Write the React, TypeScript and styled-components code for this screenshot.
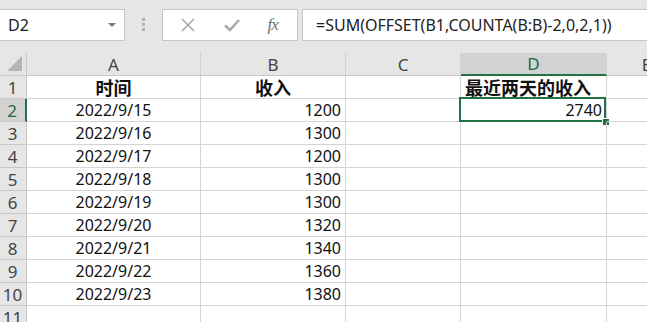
import React from "react";
import styled, { createGlobalStyle } from "styled-components";

// ─── Global ───────────────────────────────────────────────────────────────────

const GlobalStyle = createGlobalStyle`
  html, body {
    margin: 0;
    padding: 0;
    background: #ffffff;
    overflow: hidden;
  }
  body {
    font-family: "Noto Sans", "Noto Sans CJK SC", sans-serif;
  }
`;

// ─── Formula bar ──────────────────────────────────────────────────────────────

const Toolbar = styled.div`
  display: flex;
  align-items: flex-start;
  height: 53px;
  padding-top: 9px;
  box-sizing: border-box;
  background: #e6e6e6;
`;

const NameBox = styled.div`
  width: 126px;
  height: 32px;
  margin-left: -1px;
  box-sizing: border-box;
  background: #fff;
  border: 1px solid #c6c6c6;
  display: flex;
  align-items: center;
  justify-content: space-between;
  padding: 0 8px 0 8px;
  font-size: 16px;
  color: #222;
`;

const DropArrow = styled.span`
  width: 0;
  height: 0;
  border-left: 4px solid transparent;
  border-right: 4px solid transparent;
  border-top: 4px solid #7a7a7a;
`;

const Grip = styled.div`
  margin: 9px 0 0 17px;
  display: flex;
  flex-direction: column;
  gap: 2px;
`;

const GripDot = styled.span`
  width: 3px;
  height: 3px;
  background: #b3b3b3;
`;

const FuncBox = styled.div`
  margin-left: 17px;
  width: 136px;
  height: 32px;
  box-sizing: border-box;
  background: #fff;
  border: 1px solid #c6c6c6;
  display: flex;
  align-items: center;
  justify-content: space-around;
  padding: 0 6px 0 4px;
`;

const Fx = styled.span`
  font-family: "Liberation Serif", "DejaVu Serif", serif;
  font-style: italic;
  font-size: 17px;
  color: #6f6f6f;
  letter-spacing: -1px;
`;

const FormulaInput = styled.div`
  flex: 1;
  margin-left: 4px;
  margin-right: -2px;
  height: 32px;
  box-sizing: border-box;
  background: #fff;
  border: 1px solid #c6c6c6;
  display: flex;
  align-items: center;
  padding-left: 13px;
  font-size: 16px;
  color: #222;
  white-space: nowrap;
  overflow: hidden;
`;

// ─── Sheet ────────────────────────────────────────────────────────────────────

const Sheet = styled.div`
  display: grid;
  grid-template-columns: 27px 174px 145px 115px 146px 80px;
  grid-template-rows: 23px;
  grid-auto-rows: 23px;
  background: #fff;
`;

const Corner = styled.div`
  background: #e6e6e6;
  border-right: 1px solid #c8c8c8;
  border-bottom: 1px solid #c8c8c8;
  box-sizing: border-box;
  position: relative;

  &::after {
    content: "";
    position: absolute;
    right: 4px;
    bottom: 4px;
    width: 0;
    height: 0;
    border-left: 15px solid transparent;
    border-bottom: 15px solid #b4b4b4;
  }
`;

const ColHead = styled.div<{ $active?: boolean }>`
  background: ${p => (p.$active ? "#d2d2d2" : "#e6e6e6")};
  color: ${p => (p.$active ? "#1e6b41" : "#444")};
  border-right: 1px solid #cfcfcf;
  border-bottom: ${p => (p.$active ? "2px solid #217346" : "1px solid #c8c8c8")};
  box-sizing: border-box;
  display: flex;
  align-items: center;
  justify-content: center;
  font-size: 17px;
  overflow: hidden;
`;

const RowHead = styled.div<{ $active?: boolean }>`
  background: ${p => (p.$active ? "#d2d2d2" : "#e6e6e6")};
  color: ${p => (p.$active ? "#1e6b41" : "#444")};
  border-right: ${p => (p.$active ? "2px solid #217346" : "1px solid #c8c8c8")};
  border-bottom: 1px solid #c8c8c8;
  box-sizing: border-box;
  display: flex;
  align-items: center;
  justify-content: center;
  font-size: 17px;
  padding-right: 1px;
`;

const Cell = styled.div<{ $align?: "left" | "center" | "right"; $bold?: boolean; $selected?: boolean }>`
  position: relative;
  border-right: 1px solid #d4d4d4;
  border-bottom: 1px solid #d4d4d4;
  box-sizing: border-box;
  display: flex;
  align-items: center;
  justify-content: ${p =>
    p.$align === "center" ? "center" : p.$align === "right" ? "flex-end" : "flex-start"};
  padding: 0 4px 0 4px;
  font-size: ${p => (p.$bold ? "18px" : "16px")};
  font-weight: ${p => (p.$bold ? 700 : 400)};
  color: #111;
  white-space: nowrap;

  ${p =>
    p.$selected &&
    `
    &::before {
      content: "";
      position: absolute;
      left: -2px;
      top: -2px;
      right: 0;
      bottom: -1px;
      border: 2px solid #217346;
      pointer-events: none;
    }
    &::after {
      content: "";
      position: absolute;
      right: -3px;
      bottom: -4px;
      width: 6px;
      height: 6px;
      background: #217346;
      border: 1px solid #fff;
      border-right: none;
      border-bottom: none;
    }
  `}
`;

// ─── Data ─────────────────────────────────────────────────────────────────────

const columns = ["A", "B", "C", "D", "E"];

const rows: { date: string; income: number }[] = [
  { date: "2022/9/15", income: 1200 },
  { date: "2022/9/16", income: 1300 },
  { date: "2022/9/17", income: 1200 },
  { date: "2022/9/18", income: 1300 },
  { date: "2022/9/19", income: 1300 },
  { date: "2022/9/20", income: 1320 },
  { date: "2022/9/21", income: 1340 },
  { date: "2022/9/22", income: 1360 },
  { date: "2022/9/23", income: 1380 },
];

// ─── Component ────────────────────────────────────────────────────────────────

export default function App() {
  return (
    <>
      <GlobalStyle />
      <Toolbar>
        <NameBox>
          D2
          <DropArrow />
        </NameBox>
        <Grip>
          <GripDot />
          <GripDot />
          <GripDot />
        </Grip>
        <FuncBox>
          <svg width="16" height="16" viewBox="0 0 16 16">
            <path d="M2 2 L14 14 M14 2 L2 14" stroke="#a8a8a8" strokeWidth="1.6" fill="none" />
          </svg>
          <svg width="18" height="16" viewBox="0 0 18 16">
            <path d="M2 8.5 L7 13 L16 3" stroke="#a8a8a8" strokeWidth="2.6" fill="none" />
          </svg>
          <Fx>fx</Fx>
        </FuncBox>
        <FormulaInput>=SUM(OFFSET(B1,COUNTA(B:B)-2,0,2,1))</FormulaInput>
      </Toolbar>

      <Sheet>
        <Corner />
        {columns.map(c => (
          <ColHead key={c} $active={c === "D"}>
            {c}
          </ColHead>
        ))}

        <RowHead>1</RowHead>
        <Cell $align="center" $bold>时间</Cell>
        <Cell $align="center" $bold>收入</Cell>
        <Cell />
        <Cell $bold>最近两天的收入</Cell>
        <Cell />

        {rows.map((r, i) => (
          <React.Fragment key={r.date}>
            <RowHead $active={i === 0}>{i + 2}</RowHead>
            <Cell $align="center">{r.date}</Cell>
            <Cell $align="right">{r.income}</Cell>
            <Cell />
            {i === 0 ? (
              <Cell $align="right" $selected>2740</Cell>
            ) : (
              <Cell />
            )}
            <Cell />
          </React.Fragment>
        ))}

        <RowHead>11</RowHead>
        <Cell />
        <Cell />
        <Cell />
        <Cell />
        <Cell />
      </Sheet>
    </>
  );
}
